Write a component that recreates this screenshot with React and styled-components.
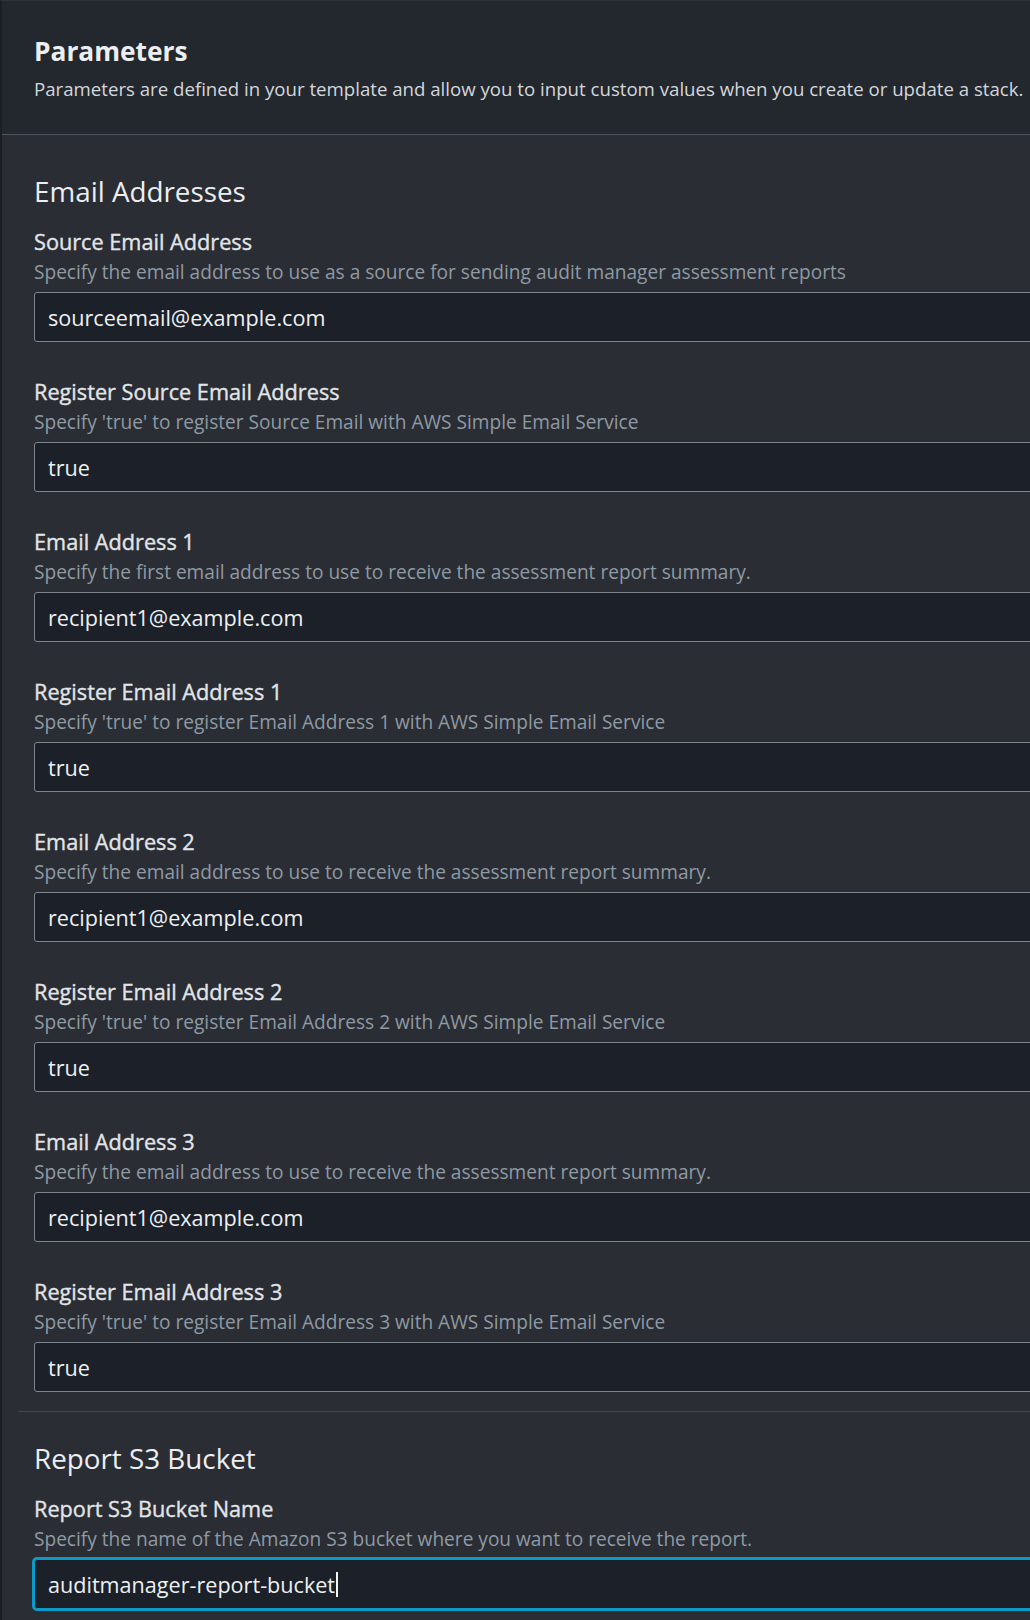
import styled, { createGlobalStyle } from "styled-components";

const GlobalStyle = createGlobalStyle`
  html, body {
    margin: 0;
    padding: 0;
    background: #2a2d33;
    overflow: hidden;
  }
  body {
    font-family: "Open Sans", "Noto Sans", sans-serif;
    -webkit-font-smoothing: antialiased;
  }
`;

const emailFields = [
  {
    label: "Source Email Address",
    hint: "Specify the email address to use as a source for sending audit manager assessment reports",
    value: "sourceemail@example.com",
  },
  {
    label: "Register Source Email Address",
    hint: "Specify 'true' to register Source Email with AWS Simple Email Service",
    value: "true",
  },
  {
    label: "Email Address 1",
    hint: "Specify the first email address to use to receive the assessment report summary.",
    value: "recipient1@example.com",
  },
  {
    label: "Register Email Address 1",
    hint: "Specify 'true' to register Email Address 1 with AWS Simple Email Service",
    value: "true",
  },
  {
    label: "Email Address 2",
    hint: "Specify the email address to use to receive the assessment report summary.",
    value: "recipient1@example.com",
  },
  {
    label: "Register Email Address 2",
    hint: "Specify 'true' to register Email Address 2 with AWS Simple Email Service",
    value: "true",
  },
  {
    label: "Email Address 3",
    hint: "Specify the email address to use to receive the assessment report summary.",
    value: "recipient1@example.com",
  },
  {
    label: "Register Email Address 3",
    hint: "Specify 'true' to register Email Address 3 with AWS Simple Email Service",
    value: "true",
  },
];

const bucketFields = [
  {
    label: "Report S3 Bucket Name",
    hint: "Specify the name of the Amazon S3 bucket where you want to receive the report.",
    value: "auditmanager-report-bucket",
    focused: true,
  },
];

// one parameter: label, hint and the value box
const Field = ({ label, hint, value, focused }) => (
  <FieldWrap>
    <Label>{label}</Label>
    <Hint>{hint}</Hint>
    <ValueBox $focused={focused}>
      {value}
      {focused && <Caret />}
    </ValueBox>
  </FieldWrap>
);

const App = () => {
  return (
    <>
      <GlobalStyle />
      <Page>
        <Header>
          <Title>Parameters</Title>
          <HeaderText>
            Parameters are defined in your template and allow you to input custom values when you create or update a stack.
          </HeaderText>
        </Header>
        <Body>
          <Section>
            <SectionTitle>Email Addresses</SectionTitle>
            {emailFields.map((f) => (
              <Field key={f.label} {...f} />
            ))}
          </Section>
          <Section $divided>
            <SectionTitle>Report S3 Bucket</SectionTitle>
            {bucketFields.map((f) => (
              <Field key={f.label} {...f} />
            ))}
          </Section>
        </Body>
      </Page>
    </>
  );
};

//whole panel, wider than the window so the inputs run off the right side
const Page = styled.div`
  width: 1100px;
  min-height: 1620px;
  border-left: 2px solid #1b1e23;
  border-top: 1px solid #30343a;
  background: #2a2d33;
`;

const Header = styled.div`
  background: #23272e;
  padding: 34px 32px 32px;
  border-bottom: 1px solid #4d545d;
`;

const Title = styled.h2`
  margin: 0;
  font-size: 26.3px;
  line-height: 32px;
  font-weight: 700;
  color: #eceef0;
`;

const HeaderText = styled.p`
  margin: 9px 0 0;
  font-size: 18.65px;
  line-height: 26px;
  color: #d3d7db;
  white-space: nowrap;
`;

const Body = styled.div`
  padding: 10px 0 0 16px;
`;

const Section = styled.section`
  padding: 30px 0 19px 16px;
  border-top: ${(p) => (p.$divided ? "1px solid #424850" : "none")};
`;

const SectionTitle = styled.h3`
  margin: 0 0 21px;
  font-size: 27.8px;
  line-height: 32px;
  font-weight: 400;
  color: #eceef0;
`;

const FieldWrap = styled.div`
  display: flex;
  flex-direction: column;
  margin-bottom: 36px;

  &:last-child {
    margin-bottom: 0;
  }
`;

const Label = styled.div`
  font-size: 21.7px;
  line-height: 28px;
  font-weight: 400;
  -webkit-text-stroke: 0.35px currentColor;
  color: #e2e5e8;
`;

const Hint = styled.div`
  margin-top: 4px;
  font-size: 19.1px;
  line-height: 24px;
  color: #8e9aa4;
  white-space: nowrap;
`;

const ValueBox = styled.div`
  margin-top: 8px;
  box-sizing: border-box;
  height: 50px;
  display: flex;
  align-items: center;
  padding: 0 13px;
  background: #1b2029;
  border: 1px solid ${(p) => (p.$focused ? "#0a9cc8" : "#7c858e")};
  box-shadow: ${(p) => (p.$focused ? "0 0 0 2px #0a9cc8" : "none")};
  border-radius: 3px;
  font-size: 21.6px;
  color: #eef0f2;
`;

const Caret = styled.span`
  display: inline-block;
  width: 1.5px;
  height: 25px;
  margin-left: 1px;
  background: #f2f4f6;
`;

export default App;
